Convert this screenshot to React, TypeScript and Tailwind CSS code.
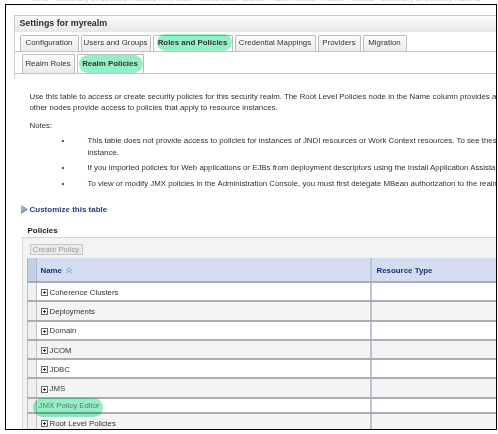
import React from 'react';

const font = "font-['Liberation_Sans',Arial,sans-serif]";

const tabs = [
  { label: 'Configuration', w: 'w-[59px]', on: false },
  { label: 'Users and Groups', w: 'w-[70px]', on: false },
  { label: 'Roles and Policies', w: 'w-[80px]', on: true },
  { label: 'Credential Mappings', w: 'w-[81px]', on: false },
  { label: 'Providers', w: 'w-[43px]', on: false },
  { label: 'Migration', w: 'w-[44px]', on: false },
];

const rows = ['Coherence Clusters', 'Deployments', 'Domain', 'JCOM', 'JDBC', 'JMS'];

function Marker({ className }: { className: string }) {
  return <span className={`absolute rounded-[9px] bg-[#4fe59c]/60 mix-blend-multiply ${className}`} />;
}

function Expander() {
  return (
    <svg width="7" height="7" viewBox="0 0 7 7" className="shrink-0">
      <rect x="0.5" y="0.5" width="6" height="6" fill="#fff" stroke="#6b6b6b" />
      <path d="M2 3.5h3M3.5 2v3" stroke="#333" />
    </svg>
  );
}

function Row({ label, odd }: { label: string; odd: boolean }) {
  return (
    <div className={`flex h-[19.3px] border-b-2 border-[#a7aeb7] ${odd ? 'bg-[#f4f4f4]' : 'bg-white'}`}>
      <div className="w-[10px] shrink-0 border-l border-r border-[#c2c2c2] bg-[#f0f0f0]" />
      <div className="flex w-[333px] shrink-0 items-center gap-[2px] pl-[4px] pt-[2px] text-[7.8px] text-[#333]">
        <Expander />
        <span>{label}</span>
      </div>
      <div className="w-[200px] shrink-0 border-l-2 border-[#bcc3cd]" />
    </div>
  );
}

export default function App() {
  return (
    <div className={`h-[434px] w-[498px] overflow-hidden bg-white ${font}`}>
      <div className="h-[4px] overflow-hidden">
        <div className="-mt-[6px] whitespace-nowrap pl-[28px] text-[7.8px] leading-[10px] text-[#cdcdcd]">
          Home &gt;Summary of Security Realms &gt;myrealm &gt;Roles and Policies &gt;Realm Roles &gt;Realm Policies &gt;Summary of Security Realms
        </div>
      </div>
      <div className="ml-[5px] h-[426px] w-[492px] overflow-hidden border-[1.5px] border-black">
        <div className="pl-[7.5px] pt-[9.5px]">
          <div className="flex h-[17px] w-[600px] items-center border-l border-t border-[#c9c9c9] bg-linear-to-b from-[#fbfbfb] to-[#e7e7e7] pl-[5px] text-[8.8px] font-bold text-[#2b2b2b]">
            Settings for myrealm
          </div>
          <div className="w-[600px] border-l border-[#cfcfcf]">
            <div className="flex items-end gap-[2px] border-b border-[#c4c4c4] pl-[5px] pt-[3px]">
              {tabs.map((t) => (
                <div
                  key={t.label}
                  className={`relative flex h-[16px] ${t.w} items-center justify-center rounded-t-[2px] border border-b-0 border-[#bdbdbd] text-[7.9px] text-[#333] ${t.on ? 'bg-white font-bold' : 'bg-linear-to-b from-[#fbfbfb] to-[#ebebeb]'}`}
                >
                  {t.on && <Marker className="-top-[2px] left-[3px] h-[17px] w-[75px]" />}
                  <span className="relative">{t.label}</span>
                </div>
              ))}
            </div>
            <div className="flex items-end gap-[2px] border-b border-[#c4c4c4] pl-[7px] pt-[2px]">
              <div className="flex h-[19px] w-[53px] items-center justify-center rounded-t-[2px] border border-b-0 border-[#bdbdbd] bg-linear-to-b from-[#fbfbfb] to-[#ebebeb] text-[7.9px] text-[#333]">
                Realm Roles
              </div>
              <div className="relative flex h-[19px] w-[67px] items-center justify-center rounded-t-[2px] border border-b-0 border-[#bdbdbd] bg-white text-[7.9px] font-bold text-[#333]">
                <Marker className="left-[1px] top-0 h-[18px] w-[64px]" />
                <span className="relative">Realm Policies</span>
              </div>
            </div>
            <div className="h-[5px]" />
          </div>

          <div className="pl-[16px] text-[7.85px] leading-[11.5px] text-[#303030]">
            <p className="mt-[12px] whitespace-nowrap">
              Use this table to access or create security policies for this security realm. The Root Level Policies node in the Name column provides access to policies that apply to all resources.
            </p>
            <p className="whitespace-nowrap">other nodes provide access to policies that apply to resource instances.</p>
            <p className="mt-[6px]">Notes:</p>
            <ul className="pl-[58px]">
              <li className="relative mt-[4px] whitespace-nowrap">
                <span className="absolute -left-[26px]">•</span>
                This table does not provide access to policies for instances of JNDI resources or Work Context resources. To see these policies, navigate to the resource
                <br />
                instance.
              </li>
              <li className="relative mt-[4px] whitespace-nowrap">
                <span className="absolute -left-[26px]">•</span>
                If you imported policies for Web applications or EJBs from deployment descriptors using the Install Application Assistant, see the deployment.
              </li>
              <li className="relative mt-[4.5px] whitespace-nowrap">
                <span className="absolute -left-[26px]">•</span>
                To view or modify JMX policies in the Administration Console, you must first delegate MBean authorization to the realm.
              </li>
            </ul>
          </div>

          <div className="ml-[7px] mt-[14px] flex items-center gap-[2px] text-[8px] font-bold leading-[11.5px] text-[#22407c]">
            <svg width="7" height="9" viewBox="0 0 7 9">
              <defs>
                <linearGradient id="tri" x1="0" y1="0" x2="1" y2="1">
                  <stop offset="0" stopColor="#c5d3ea" />
                  <stop offset="1" stopColor="#5a73a6" />
                </linearGradient>
              </defs>
              <path d="M0.5 0.5L6.5 4.5L0.5 8.5Z" fill="url(#tri)" stroke="#6f84ad" strokeWidth="0.6" />
            </svg>
            <span>Customize this table</span>
          </div>

          <div className="ml-[14px] mt-[9.5px] text-[8px] font-bold leading-[11.5px] text-[#222]">Policies</div>

          <div className="ml-[8px] mt-[1px] w-[600px] border-l border-t border-[#d4d4d4] bg-[#f3f3f3] pt-[6px]">
            <div className="ml-[7px] flex h-[11px] w-[53px] items-center justify-center border border-[#c8c8c8] bg-[#e9e9e9] text-[7.8px] text-[#9b9b9b]">
              Create Policy
            </div>
            <div className="ml-[4px] mt-[3px]">
              <div className="flex h-[25px] border-b-2 border-[#a7aeb7] bg-[#d2deef]">
                <div className="w-[10px] shrink-0 border-l border-r border-[#a9b8d0] bg-[#c2d0e6]" />
                <div className="flex w-[333px] shrink-0 items-center gap-[3px] pl-[4px] pt-[2px] text-[7.9px] font-bold text-[#1f2c85]">
                  <span>Name</span>
                  <svg width="8" height="7" viewBox="0 0 8 7">
                    <path d="M1 3.5L4 0.8L7 3.5M1 6.3L4 3.6L7 6.3" fill="none" stroke="#8c9cbc" strokeWidth="1" />
                  </svg>
                </div>
                <div className="flex w-[200px] shrink-0 items-center border-l-2 border-[#b7c2d4] pl-[5px] pt-[2px] text-[7.9px] font-bold text-[#1f2c85]">
                  Resource Type
                </div>
              </div>
              {rows.map((r, i) => (
                <Row key={r} label={r} odd={i % 2 === 1} />
              ))}
              <div className="flex h-[15px] border-b-2 border-[#a7aeb7] bg-white">
                <div className="w-[10px] shrink-0 border-l border-r border-[#c2c2c2] bg-[#f0f0f0]" />
                <div className="relative flex w-[333px] shrink-0 items-center pl-[2px] pt-[1px] text-[7.8px] text-[#5d7a68]">
                  <Marker className="-left-[4px] -top-[1px] h-[19px] w-[70px]" />
                  <span className="relative">JMX Policy Editor</span>
                </div>
                <div className="w-[200px] shrink-0 border-l-2 border-[#bcc3cd]" />
              </div>
              <Row label="Root Level Policies" odd />
            </div>
          </div>
        </div>
      </div>
    </div>
  );
}
